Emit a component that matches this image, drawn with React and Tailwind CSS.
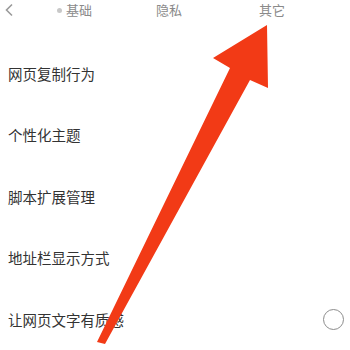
export default function App() {
  const rows = ["网页复制行为", "个性化主题", "脚本扩展管理", "地址栏显示方式", "让网页文字有质感"];
  return (
    <div className="relative w-[350px] h-[350px] overflow-hidden bg-white" style={{ fontFamily: '"Noto Sans CJK SC", "Noto Sans", sans-serif' }}>
      <div className="flex items-center h-[20px] text-[13px] leading-[16px] text-[#8a8a8a]">
        <svg width="10" height="14" viewBox="0 0 10 14" className="ml-[4px]">
          <polyline points="8,1.5 2.5,7 8,12.5" fill="none" stroke="#9a9a9a" strokeWidth="1.6" />
        </svg>
        <span className="ml-[43px] w-[5px] h-[5px] rounded-full bg-[#c8c8c8]"></span>
        <span className="ml-[4px]">基础</span>
        <span className="ml-[64px]">隐私</span>
        <span className="ml-[77px]">其它</span>
      </div>
      <div className="flex flex-col mt-[23px]">
        {rows.map((r, i) => (
          <div key={i} className="flex items-center justify-between h-[61.5px] pl-[8px] pr-[6px] text-[14.5px] text-[#333333]">
            <span>{r}</span>
            {i === 4 && <span className="w-[21px] h-[21px] rounded-full border-[1.5px] border-[#8c8c8c]"></span>}
          </div>
        ))}
      </div>
      <svg className="absolute inset-0 pointer-events-none" width="350" height="350" viewBox="0 0 350 350">
        <polygon points="267,25 268,88 250,80 105,344 97,342 230,68 213,58" fill="#f23a16" />
      </svg>
    </div>
  );
}
